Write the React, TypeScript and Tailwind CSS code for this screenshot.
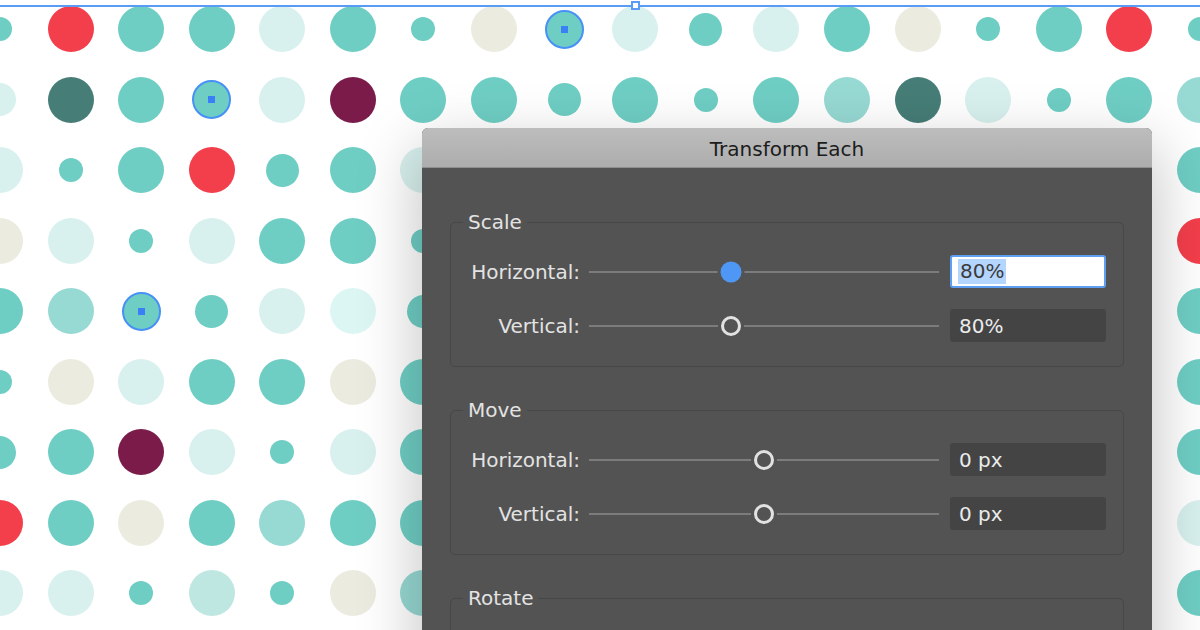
const font = "font-['DejaVu_Sans','Noto_Sans',sans-serif]"

const colors: Record<string, string> = {
  t: "bg-[#6fcec4]",
  l: "bg-[#d8f1ee]",
  m: "bg-[#97d9d3]",
  d: "bg-[#467d77]",
  r: "bg-[#f33e4b]",
  p: "bg-[#7a1b4a]",
  b: "bg-[#ebecdf]",
  c: "bg-[#dcf7f3]",
  g: "bg-[#bee7e2]",
}

const sizes: Record<string, string> = {
  L: "w-[46px] h-[46px]",
  M: "w-[33px] h-[33px]",
  S: "w-[24px] h-[24px]",
}

const rows = [
  "tS rL tL tL lL tL tS bL x lL tM lL tL bL tS tL rL tS",
  "lM dL tL x lL pL tL tL tM tL tS tL mL dL lL tS tL mL",
  "lL tS tL rL tM tL lL tL bL tM lL tL tS mL tL lL tL tL",
  "bL lL tS lL tL tL tS lL tL tL bL tS tL lL tM tL mL rL",
  "tL mL x tM lL cL tM tL lL tS tL bL tL tL lL tM tL tL",
  "tS bL lL tL tL bL tL mL tL lL tS tL bL tL tL lL tL tL",
  "tM tL pL lL tS lL tL tL bL tL mL tL tS lL tL tL bL tL",
  "rL tL bL tL mL tL tL lL tL tS tL tL lL bL tL mL tL lL",
  "lL lL tS gL tS bL mL tL tL lL tL tM tL bL tL lL tL tL",
]

function Dot({ code }: { code: string }) {
  if (code === "x") {
    return (
      <div className="w-[39px] h-[39px] rounded-full bg-[#6fcec4] border-2 border-[#4790f5] flex items-center justify-center">
        <div className="w-[7px] h-[7px] bg-[#3a7ff5]" />
      </div>
    )
  }
  return <div className={`rounded-full ${colors[code[0]]} ${sizes[code[1]]}`} />
}

function Slider({ pos, active }: { pos: number; active?: boolean }) {
  return (
    <div className="relative w-[350px] h-[24px] flex items-center">
      <div className="w-full h-[2px] bg-[#7c7c7c]" />
      <div
        className={
          active
            ? "absolute top-1/2 -translate-x-1/2 -translate-y-1/2 w-[21px] h-[21px] rounded-full bg-[#4f97f5] shadow-[0_0_0_3px_#535353]"
            : "absolute top-1/2 -translate-x-1/2 -translate-y-1/2 w-[20px] h-[20px] rounded-full bg-[#535353] border-[3px] border-[#e2e2e2] shadow-[0_0_0_3px_#535353]"
        }
        style={{ left: `${pos}%` }}
      />
    </div>
  )
}

function Row({ label, pos, value, active }: { label: string; pos: number; value: string; active?: boolean }) {
  return (
    <div className="flex items-center h-[33px]">
      <div className="w-[117px] text-right text-[20px] text-[#e3e3e3] leading-none">{label}</div>
      <div className="ml-[9px]">
        <Slider pos={pos} active={active} />
      </div>
      {active ? (
        <div className="ml-[11px] w-[156px] h-[33px] bg-white border-2 border-[#5e9ff2] rounded-[3px] flex items-center pl-[6px]">
          <span className="bg-[#b4d5fe] text-[#3b3b3b] text-[20px] leading-[25px] px-[2px]">{value}</span>
        </div>
      ) : (
        <div className="ml-[11px] w-[156px] h-[33px] bg-[#444444] rounded-[3px] flex items-center pl-[9px] text-[20px] text-[#ebebeb]">
          {value}
        </div>
      )}
    </div>
  )
}

function Group({ title, children }: { title: string; children?: React.ReactNode }) {
  return (
    <fieldset className="shrink-0 border border-[#474747] rounded-[5px] pl-[12px] pr-[16px] pt-[21px] pb-[24px]">
      <legend className="px-[5px] text-[20px] leading-[24px] text-[#e3e3e3]">{title}</legend>
      <div className="flex flex-col gap-[21px]">{children}</div>
    </fieldset>
  )
}

export default function App() {
  return (
    <div className={`relative w-[1200px] h-[630px] overflow-hidden bg-white ${font}`}>
      <div className="grid grid-cols-[repeat(18,70.59px)] auto-rows-[70.5px] ml-[-35.3px] mt-[-6.25px]">
        {rows.flatMap((row, i) =>
          row.split(" ").map((code, j) => (
            <div key={`${i}-${j}`} className="flex items-center justify-center">
              <Dot code={code} />
            </div>
          ))
        )}
      </div>

      {/* selection bounds */}
      <div className="absolute left-0 right-0 top-[5px] h-[1.5px] bg-[#5a9cf5]" />
      <div className="absolute left-[631px] top-[1px] w-[9px] h-[9px] bg-white border-2 border-[#5a9cf5]" />

      {/* Transform Each dialog */}
      <div className="absolute left-[422px] top-[128px] w-[730px] h-[560px] rounded-t-[6px] bg-[#535353] shadow-[0_22px_60px_6px_rgba(0,0,0,0.22)]">
        <div className="h-[40px] pt-[3px] rounded-t-[6px] bg-gradient-to-b from-[#bdbdbd] to-[#adadad] border-b border-[#8f8f8f] flex items-center justify-center">
          <span className="text-[20px] text-[#1c1c1c]">Transform Each</span>
        </div>
        <div className="px-[28px] pt-[42px] flex flex-col gap-[31px]">
          <Group title="Scale">
            <Row label="Horizontal:" pos={40.6} value="80%" active />
            <Row label="Vertical:" pos={40.6} value="80%" />
          </Group>
          <Group title="Move">
            <Row label="Horizontal:" pos={50} value="0 px" />
            <Row label="Vertical:" pos={50} value="0 px" />
          </Group>
          <Group title="Rotate">
            <div className="h-[60px]" />
          </Group>
        </div>
      </div>
    </div>
  )
}
